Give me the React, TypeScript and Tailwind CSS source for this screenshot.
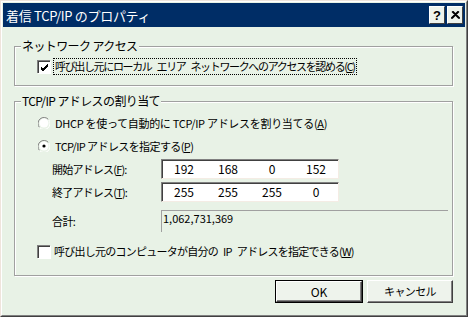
import React from "react";

const font = { fontFamily: '"Noto Sans CJK JP", "Liberation Sans", sans-serif' };

function Check({ checked }: { checked?: boolean }) {
  return (
    <div className="w-[13px] h-[13px] bg-white border-t border-l border-[#808080] shadow-[inset_1px_1px_0_#404040,1px_1px_0_#ffffff] flex items-center justify-center shrink-0">
      {checked && (
        <svg width="9" height="9" viewBox="0 0 9 9">
          <path d="M1 4 L3 6 L8 1 M1 5 L3 7 L8 2 M1 6 L3 8 L8 3" stroke="#000" strokeWidth="1" fill="none" shapeRendering="crispEdges" />
        </svg>
      )}
    </div>
  );
}

function Radio({ checked }: { checked?: boolean }) {
  return (
    <svg width="12" height="12" viewBox="0 0 12 12" className="shrink-0">
      <path d="M10.5 2.5 A6 6 0 0 0 1.5 10.5" stroke="#808080" strokeWidth="1" fill="none" />
      <path d="M1.5 10.5 A6 6 0 0 0 10.5 2.5" stroke="#ffffff" strokeWidth="1" fill="none" />
      <circle cx="6" cy="6" r="4.5" fill="#fff" />
      {checked && <circle cx="6" cy="6" r="1.6" fill="#000" />}
    </svg>
  );
}

function IpBox({ vals }: { vals: string[] }) {
  return (
    <div className="w-[178px] h-[20px] bg-white border-t border-l border-[#808080] border-r border-b border-r-[#f4ece4] border-b-[#f4ece4] shadow-[inset_1px_1px_0_#404040] flex items-center text-[12px] text-black tracking-normal">
      {vals.map((v, i) => (
        <div key={i} className="flex-1 text-center">{v}</div>
      ))}
    </div>
  );
}

function Group({ title, children, className }: { title: string; children: React.ReactNode; className?: string }) {
  return (
    <div className={"relative border border-[#a0a0a0] shadow-[1px_1px_0_#ffffff,inset_1px_1px_0_#ffffff] " + (className ?? "")}>
      <div className="absolute -top-[8px] left-[6px] bg-[#e8f2e6] px-[1px] text-[12px] leading-[14px] tracking-[-0.6px]">{title}</div>
      {children}
    </div>
  );
}

const Sp = () => <span className="inline-block w-[5px]"> </span>;

export default function App() {
  return (
    <div style={font} className="w-[468px] h-[317px] bg-[#e8f2e6] border-t border-l border-[#efe4dc] border-r border-b border-r-[#404040] border-b-[#404040] text-black overflow-hidden">
      <div className="w-full h-full border-t border-l border-white border-r border-b border-r-[#808080] border-b-[#808080] pl-[1px] pt-[1px] pr-[1px] flex flex-col">
        {/* Title bar */}
        <div className="h-[24px] bg-[#002d66] flex items-center pl-[3px] pr-[2px] shrink-0">
          <div className="text-white text-[13px] leading-none flex-1 tracking-[-0.3px]">着信 TCP/IP のプロパティ</div>
          <div className="flex gap-[2px]">
            <div className="w-[16px] h-[18px] bg-[#eef3ec] border-t border-l border-white border-r border-b border-r-[#404040] border-b-[#404040] flex items-center justify-center font-bold text-[13px] leading-none" style={{ fontFamily: '"Liberation Sans", sans-serif' }}>?</div>
            <div className="w-[16px] h-[18px] bg-[#eef3ec] border-t border-l border-white border-r border-b border-r-[#404040] border-b-[#404040] flex items-center justify-center">
              <svg width="9" height="8" viewBox="0 0 9 8"><path d="M1 0.5 L8 7.5 M8 0.5 L1 7.5 M2 0.5 L9 7.5 M7 0.5 L0 7.5" stroke="#000" strokeWidth="1.3" /></svg>
            </div>
          </div>
        </div>

        <div className="flex-1 px-[11px] pt-[19px] text-[11px] tracking-[-0.6px]">
          <Group title="ネットワーク アクセス" className="h-[40px] mr-[1px] flex items-center pl-[22px]">
            <div className="flex items-center gap-[4px] mt-[1px]">
              <Check checked />
              <div className="outline-1 outline-dotted outline-black px-[1px] leading-[15px] tracking-[-1.35px]">呼び出し元にローカル<Sp />エリア<Sp />ネットワークへのアクセスを認める(<span className="underline">C</span>)</div>
            </div>
          </Group>

          <Group title="TCP/IP アドレスの割り当て" className="mt-[15px] h-[175px] mr-[1px] pl-[22px] pt-[13px]">
            <div className="flex items-center gap-[5px] h-[16px] pl-[1px]">
              <Radio />
              <div className="tracking-[-0.3px]">DHCP を使って自動的に TCP/IP アドレスを割り当てる(<span className="underline">A</span>)</div>
            </div>
            <div className="flex items-center gap-[5px] h-[16px] mt-[7px] pl-[1px]">
              <Radio checked />
              <div>TCP/IP アドレスを指定する(<span className="underline">P</span>)</div>
            </div>
            <div className="pl-[15px] mt-[5px] flex flex-col">
              <div className="flex items-center h-[20px]">
                <div className="w-[109px] tracking-[-0.8px]">開始アドレス(<span className="underline">F</span>):</div>
                <IpBox vals={["192", "168", "0", "152"]} />
              </div>
              <div className="flex items-center h-[20px] mt-[3px]">
                <div className="w-[109px] tracking-[-0.8px]">終了アドレス(<span className="underline">T</span>):</div>
                <IpBox vals={["255", "255", "255", "0"]} />
              </div>
              <div className="flex items-start h-[22px] mt-[8px]">
                <div className="w-[109px] mt-[3px]">合計:</div>
                <div className="flex-1 h-[22px] border-t border-l border-[#a0a0a0] pl-[1px] leading-[14px] mr-[4px] tracking-normal">1,062,731,369</div>
              </div>
            </div>
            <div className="flex items-center gap-[4px] mt-[11px]">
              <Check />
              <div className="tracking-[-0.75px]">呼び出し元のコンピュータが自分の<Sp />IP<Sp />アドレスを指定できる(<span className="underline">W</span>)</div>
            </div>
          </Group>

          <div className="flex justify-end gap-[4px] mt-[4px] mr-[1px] tracking-normal">
            <div className="w-[88px] h-[23px] border border-black">
              <div className="w-full h-full bg-[#eef3ec] border-t border-l border-white border-r border-b border-r-[#404040] border-b-[#404040] shadow-[inset_-1px_-1px_0_#808080] flex items-center justify-center text-[12px]">OK</div>
            </div>
            <div className="w-[86px] h-[23px] bg-[#eef3ec] border-t border-l border-white border-r border-b border-r-[#404040] border-b-[#404040] shadow-[inset_-1px_-1px_0_#808080] flex items-center justify-center text-[11px] tracking-[-0.6px]">キャンセル</div>
          </div>
        </div>
      </div>
    </div>
  );
}
